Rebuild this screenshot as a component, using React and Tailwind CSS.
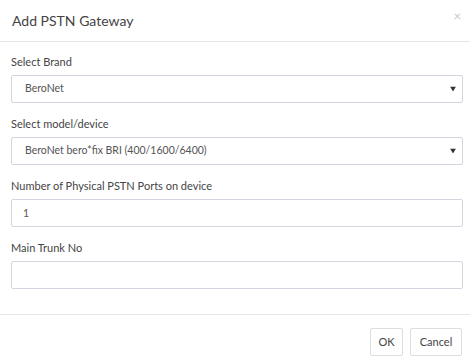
import React, { useState } from "react";

function Caret() {
  return (
    <svg width="6" height="5" viewBox="0 0 6 5" className="absolute right-[6px] top-1/2 -translate-y-1/2">
      <path d="M0 0 L6 0 L3 5 Z" fill="#333" />
    </svg>
  );
}

function Field({ label, children }) {
  return (
    <div className="mb-[12px]">
      <label className="block h-[17px] mb-[5px] text-[11px] leading-[17px] text-[#444]">{label}</label>
      {children}
    </div>
  );
}

export default function App() {
  const [ports, setPorts] = useState("1");
  const [trunk, setTrunk] = useState("");

  return (
    <div className="w-[470px] h-[362px] bg-white font-['Lato','Liberation_Sans',sans-serif] text-[#444]">
      <div className="relative h-[42px] border-b border-[#e5e5e5] px-[12px] flex items-center">
        <h4 className="text-[14px] text-[#444]">Add PSTN Gateway</h4>
        <button className="absolute right-[9px] top-[10px] text-[13px] leading-none text-[#c8c8c8]">×</button>
      </div>

      <div className="pl-[11px] pr-[7px] pt-[11px] pb-[13px]">
        <Field label="Select Brand">
          <div className="relative h-[28px] border border-[#d2d6de] rounded-[2px] px-[13px] flex items-center text-[10.5px] text-[#555]">
            BeroNet
            <Caret />
          </div>
        </Field>
        <Field label="Select model/device">
          <div className="relative h-[28px] border border-[#d2d6de] rounded-[2px] px-[13px] flex items-center text-[10.5px] text-[#555]">
            BeroNet bero*fix BRI (400/1600/6400)
            <Caret />
          </div>
        </Field>
        <Field label="Number of Physical PSTN Ports on device">
          <input
            className="block w-full h-[28px] border border-[#d2d6de] rounded-[2px] px-[11px] text-[10.5px] text-[#555] outline-none"
            value={ports}
            onChange={(e) => setPorts(e.target.value)}
          />
        </Field>
        <Field label="Main Trunk No">
          <input
            className="block w-full h-[28px] border border-[#d2d6de] rounded-[2px] px-[11px] text-[10.5px] text-[#555] outline-none"
            value={trunk}
            onChange={(e) => setTrunk(e.target.value)}
          />
        </Field>
      </div>

      <div className="border-t border-[#e5e5e5] pr-[8px] pt-[13px] flex justify-end gap-[7px]">
        <button className="h-[28px] w-[33px] border border-[#ddd] rounded-[2px] bg-white text-[11px] text-[#444]">OK</button>
        <button className="h-[28px] w-[52px] border border-[#ddd] rounded-[2px] bg-white text-[11px] text-[#444]">Cancel</button>
      </div>
    </div>
  );
}
